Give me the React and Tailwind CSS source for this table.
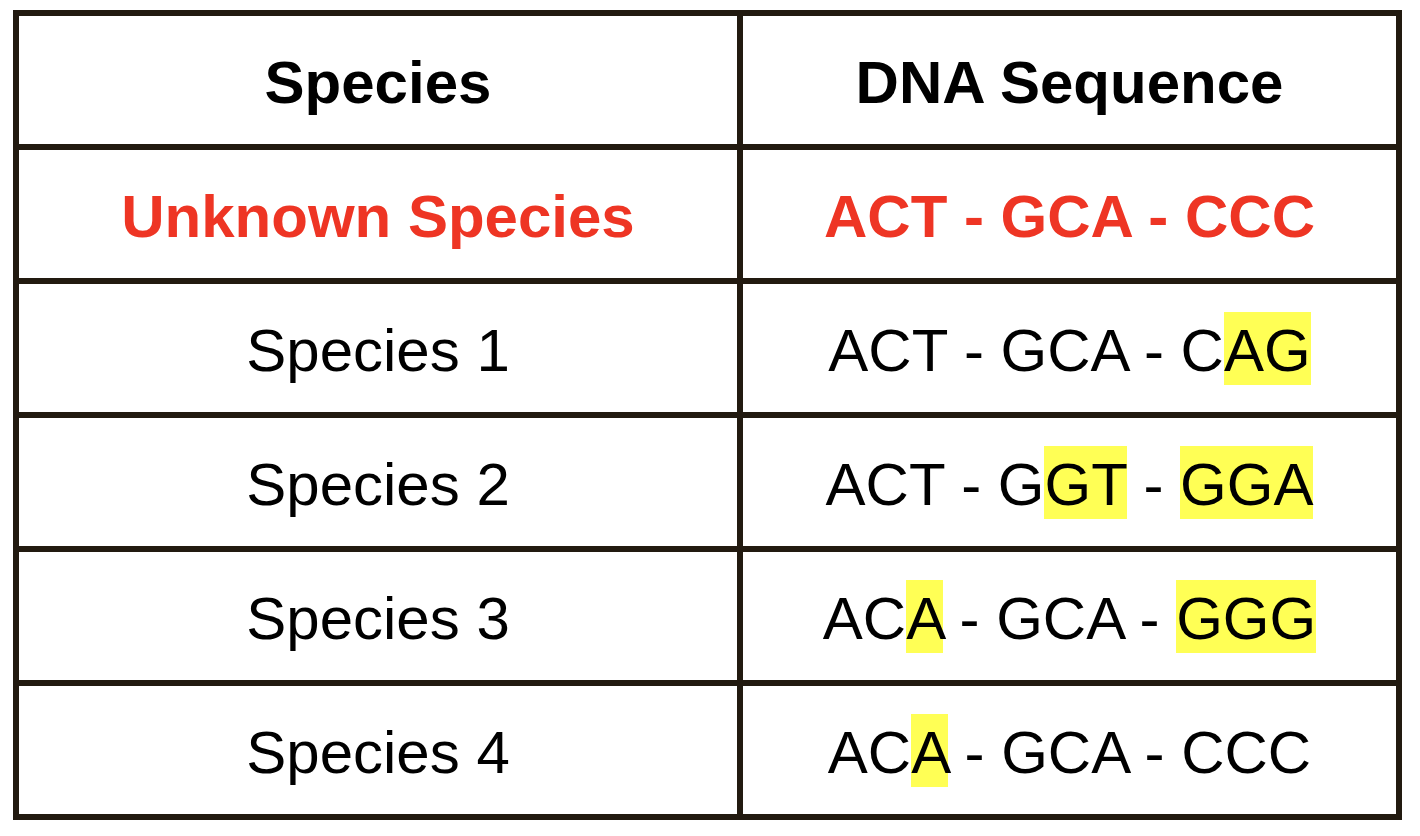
import React from "react";

const Hl = ({ children }) => (
  <span className="bg-[#ffff55] pt-[5px] pb-[1px]">{children}</span>
);

const rows = [
  { name: "Species 1", seq: <>ACT - GCA - C<Hl>AG</Hl></> },
  { name: "Species 2", seq: <>ACT - G<Hl>GT</Hl> - <Hl>GGA</Hl></> },
  { name: "Species 3", seq: <>AC<Hl>A</Hl> - GCA - <Hl>GGG</Hl></> },
  { name: "Species 4", seq: <>AC<Hl>A</Hl> - GCA - CCC</> },
];

const cell =
  "h-[134px] pt-[4px] flex items-center justify-center border-r-[6px] border-b-[6px] border-[#221a10] whitespace-nowrap";

export default function App() {
  return (
    <div
      className="w-[1420px] h-[836px] bg-white pl-[13px] pt-[10px]"
      style={{ fontFamily: '"Liberation Sans", Arial, sans-serif' }}
    >
      <div className="grid grid-cols-[724px_659px] w-[1389px] border-l-[6px] border-t-[6px] border-[#221a10] text-[60px] leading-[1.15] text-black">
        <div className={cell + " font-bold"}>Species</div>
        <div className={cell + " font-bold"}>DNA Sequence</div>
        <div className={cell + " font-bold text-[#ee3524]"}>Unknown Species</div>
        <div className={cell + " font-bold text-[#ee3524]"}>ACT - GCA - CCC</div>
        {rows.map((r) => (
          <React.Fragment key={r.name}>
            <div className={cell}>{r.name}</div>
            <div className={cell}>
              <span>{r.seq}</span>
            </div>
          </React.Fragment>
        ))}
      </div>
    </div>
  );
}
